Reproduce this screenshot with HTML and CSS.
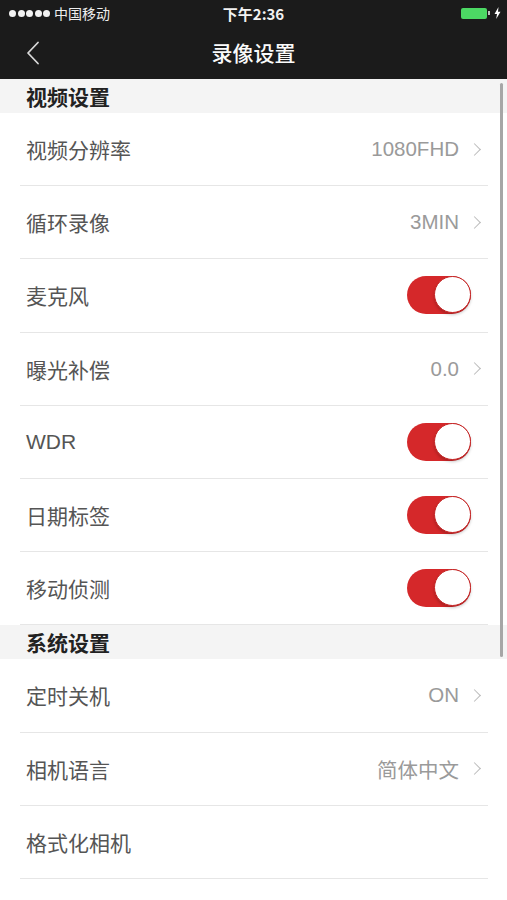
FILE: index.html
```html
<!DOCTYPE html>
<html lang="zh-CN">
<head>
  <meta charset="UTF-8">
  <meta name="viewport" content="width=device-width, initial-scale=1.0">
  <title>录像设置</title>
  <link rel="stylesheet" href="styles.css">
</head>
<body>
  <div class="screen">
    <header class="topbar">
      <div class="status">
        <div class="carrier">
          <span class="dots"><i></i><i></i><i></i><i></i><i></i></span>
          中国移动
        </div>
        <div class="time">下午2:36</div>
        <div class="battery">
          <span class="cell"></span><span class="nub"></span>
          <svg class="bolt" width="7" height="12" viewBox="0 0 7 12"><path d="M4.5 0 L0.5 7 H3 L2.2 12 L6.5 4.8 H4 Z" fill="#fff"/></svg>
        </div>
      </div>
      <div class="nav">
        <svg class="back" width="14" height="24" viewBox="0 0 14 24"><path d="M12 1.5 L2 12 L12 22.5" fill="none" stroke="#d8d8d8" stroke-width="1.8" stroke-linecap="round" stroke-linejoin="round"/></svg>
        <h1>录像设置</h1>
      </div>
    </header>

    <main class="list">
      <div class="group-title">视频设置</div>
      <div class="row"><span class="label">视频分辨率</span><span class="value">1080FHD<b class="chev"></b></span></div>
      <div class="row"><span class="label">循环录像</span><span class="value">3MIN<b class="chev"></b></span></div>
      <div class="row"><span class="label">麦克风</span><span class="switch on"><i></i></span></div>
      <div class="row"><span class="label">曝光补偿</span><span class="value">0.0<b class="chev"></b></span></div>
      <div class="row"><span class="label">WDR</span><span class="switch on"><i></i></span></div>
      <div class="row"><span class="label">日期标签</span><span class="switch on"><i></i></span></div>
      <div class="row"><span class="label">移动侦测</span><span class="switch on"><i></i></span></div>

      <div class="group-title">系统设置</div>
      <div class="row"><span class="label">定时关机</span><span class="value">ON<b class="chev"></b></span></div>
      <div class="row"><span class="label">相机语言</span><span class="value">简体中文<b class="chev"></b></span></div>
      <div class="row"><span class="label">格式化相机</span></div>

      <div class="scrollbar"></div>
    </main>
  </div>
</body>
</html>
```

FILE: styles.css
```css
body {
  margin: 0;
  background: #fff;
  font-family: "Liberation Sans", "Noto Sans CJK SC", sans-serif;
}
.screen {
  width: 507px;
  height: 900px;
  overflow: hidden;
}
.topbar {
  background: #1b1b1b;
  color: #fff;
  height: 79px;
}
.status {
  height: 26px;
  display: flex;
  align-items: center;
  justify-content: space-between;
  padding: 0 6px 0 9px;
  position: relative;
}
.carrier {
  display: flex;
  align-items: center;
  gap: 4px;
  font-size: 14px;
  font-family: "Noto Sans CJK SC", sans-serif;
  color: #eee;
}
.dots {
  display: flex;
  gap: 1.5px;
}
.dots i {
  width: 7px;
  height: 7px;
  border-radius: 50%;
  background: #f2f2f2;
}
.time {
  position: absolute;
  left: 0;
  right: 0;
  text-align: center;
  font-size: 15px;
  font-weight: bold;
  font-family: "Noto Sans CJK SC", sans-serif;
  color: #f2f2f2;
}
.battery {
  display: flex;
  align-items: center;
}
.cell {
  width: 26px;
  height: 11px;
  border-radius: 2px;
  background: #4cd964;
}
.nub {
  width: 2px;
  height: 4px;
  background: #bdbdbd;
  margin-left: 1px;
}
.bolt {
  margin-left: 4px;
}
.nav {
  height: 53px;
  display: flex;
  align-items: center;
  justify-content: center;
  position: relative;
}
.back {
  position: absolute;
  left: 26px;
  top: 15px;
}
.nav h1 {
  margin: 0 0 2px;
  font-size: 21px;
  font-weight: 500;
  font-family: "Noto Sans CJK SC", sans-serif;
  color: #fafafa;
}
.list {
  position: relative;
}
.group-title {
  height: 34px;
  line-height: 34px;
  padding-left: 26px;
  background: #f4f4f4;
  color: #222;
  font-size: 21px;
  font-weight: bold;
  font-family: "Noto Sans CJK SC", sans-serif;
}
.row {
  height: 72.2px;
  margin: 0 19px 0 20px;
  padding: 0 6px;
  border-bottom: 1px solid #e6e6e6;
  display: flex;
  align-items: center;
  justify-content: space-between;
}
.label {
  font-size: 21px;
  color: #555;
}
.value {
  display: flex;
  align-items: center;
  font-size: 20.5px;
  color: #9a9a9a;
  padding-right: 3px;
}
.chev {
  width: 8px;
  height: 8px;
  border-top: 1.5px solid #bbb;
  border-right: 1.5px solid #bbb;
  transform: rotate(45deg);
  margin-left: 11px;
}
.switch {
  width: 64px;
  height: 38px;
  border-radius: 19px;
  background: #d5282a;
  display: flex;
  justify-content: flex-end;
  margin-right: 11px;
}
.switch i {
  width: 35px;
  height: 35px;
  border-radius: 50%;
  background: #fff;
  border: 1.5px solid #c42222;
  box-shadow: 0 2px 3px rgba(0, 0, 0, 0.2);
}
.scrollbar {
  position: absolute;
  top: 4px;
  right: 4px;
  width: 3px;
  height: 574px;
  border-radius: 2px;
  background: #a6a6a6;
}
```
